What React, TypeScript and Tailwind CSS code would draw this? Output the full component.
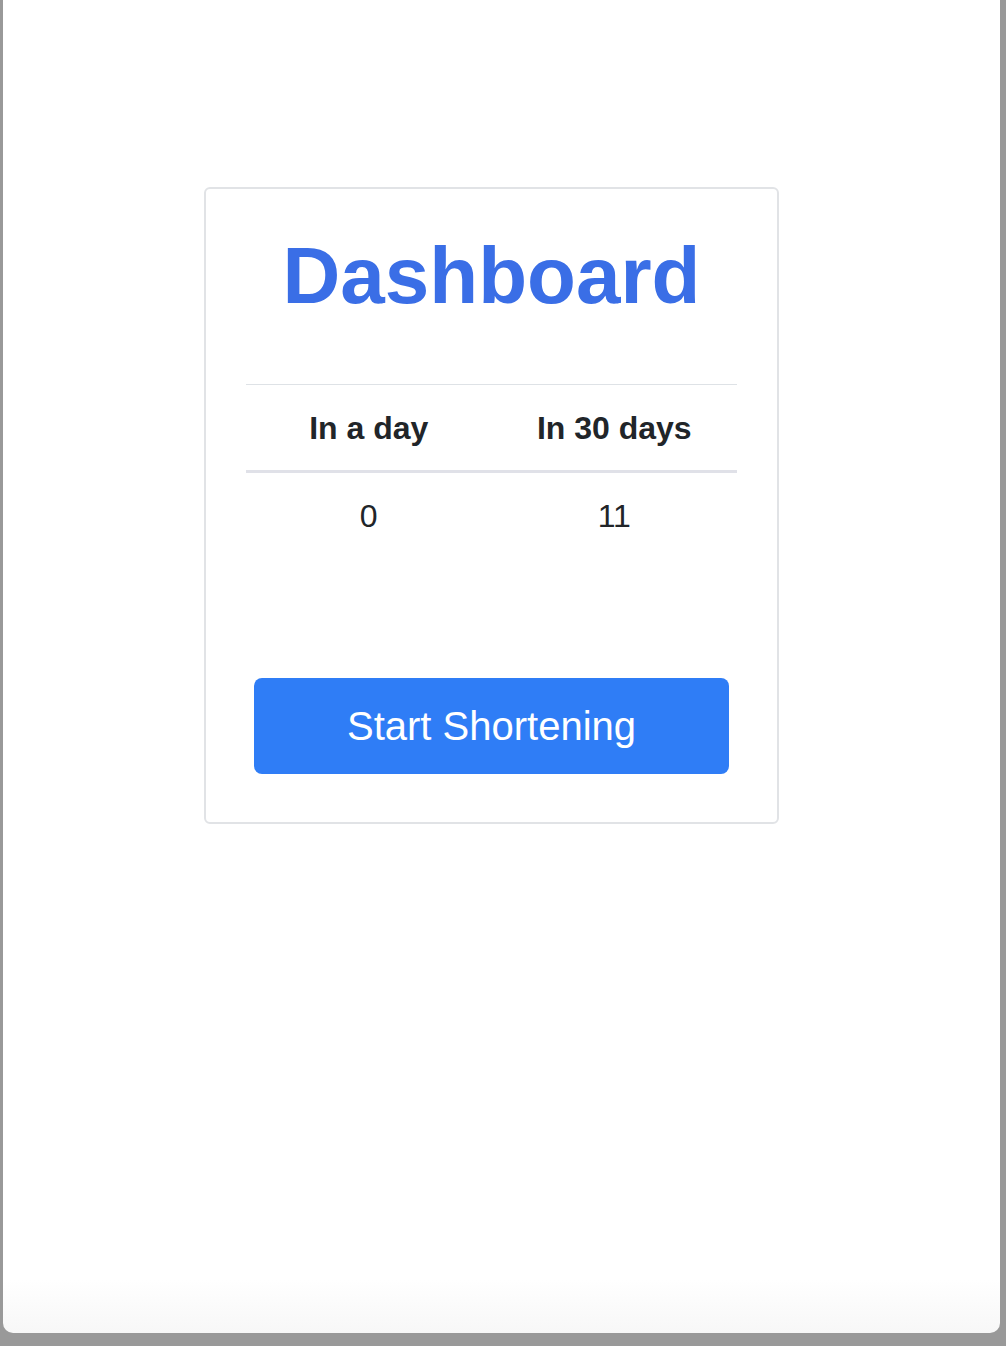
export default function App() {
  const font = { fontFamily: '"Liberation Sans", Arial, sans-serif' };

  return (
    <div className="w-[1006px] h-[1346px] bg-[#999999] pl-[3px] pr-[6px] pb-[13px]" style={font}>
      <div className="h-full bg-gradient-to-b from-white from-[96%] to-[#f7f7f7] rounded-b-[10px] pt-[187px] pl-[201px]">
        {/* Card */}
        <div className="w-[575px] border-2 border-[#e1e3e6] rounded-[6px] bg-white px-[40px] pt-[39px] pb-[48px]">
          <h1 className="text-center text-[80px] leading-[96px] font-bold text-[#3a6ee6]">Dashboard</h1>

          <table className="w-full mt-[60px] text-[#212529] table-fixed">
            <thead>
              <tr className="border-t border-[#dee2e6] border-b-[3px] border-b-[#e0e1e8]">
                <th className="h-[87px] text-[32px] font-bold">In a day</th>
                <th className="h-[87px] text-[32px] font-bold">In 30 days</th>
              </tr>
            </thead>
            <tbody>
              <tr>
                <td className="h-[88px] text-center text-[32px]">0</td>
                <td className="h-[88px] text-center text-[32px]">11</td>
              </tr>
            </tbody>
          </table>

          <div className="mt-[118px] px-[8px]">
            <button className="w-full h-[96px] rounded-[8px] bg-[#2f7df6] text-white text-[40px]">
              Start Shortening
            </button>
          </div>
        </div>
      </div>
    </div>
  );
}
